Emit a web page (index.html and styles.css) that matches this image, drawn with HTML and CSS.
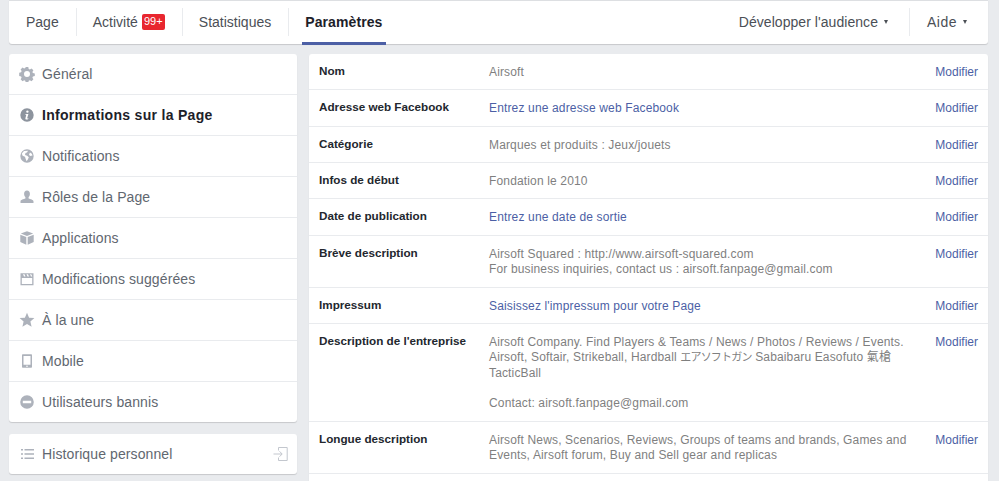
FILE: index.html
```html
<!DOCTYPE html>
<html lang="fr">
<head>
    <meta charset="UTF-8">
    <title>Informations sur la Page</title>
    <link rel="stylesheet" href="styles.css">
</head>
<body>

<div class="topbar">
    <div class="tabs">
        <a class="tab">Page</a>
        <a class="tab">Activité <span class="badge">99+</span></a>
        <a class="tab">Statistiques</a>
        <a class="tab tab-active">Paramètres</a>
    </div>
    <div class="tabs">
        <a class="tab tab-menu">Développer l'audience <i class="caret"></i></a>
        <a class="tab tab-menu tab-help">Aide <i class="caret"></i></a>
    </div>
</div>

<div class="columns">
    <div class="sidebar">
        <ul class="card menu">
            <li>
                <svg class="icon" viewBox="0 0 16 16"><path fill-rule="evenodd" d="M6.700 1h2.600l.4 1.900 1.200.5 1.600-1 1.900 1.900-1 1.600.5 1.200 1.900.4v2.600l-1.900.4-.5 1.200 1 1.600-1.900 1.900-1.600-1-1.200.5-.4 1.900H6.700l-.4-1.900-1.200-.5-1.600 1-1.900-1.900 1-1.600-.5-1.200-1.900-.4V6.700l1.900-.4.5-1.200-1-1.600 1.900-1.900 1.600 1 1.200-.5zM8 5a3 3 0 1 0 0 6 3 3 0 0 0 0-6z"/></svg>
                Général
            </li>
            <li class="current">
                <svg class="icon icon-dark" viewBox="0 0 16 16"><path fill-rule="evenodd" d="M8 1.300a6.700 6.700 0 1 1 0 13.400A6.700 6.700 0 0 1 8 1.300zM8.400 3.400a1.200 1.200 0 1 0 0 2.400 1.200 1.200 0 0 0 0-2.400zM6.500 7l-.2.800h1l-.9 3.500c-.2.900.3 1.300 1 1.300.7 0 1.500-.3 2-.7l-.1-.7-.9.300c-.2 0-.3-.1-.2-.4L9.400 7z"/></svg>
                Informations sur la Page
            </li>
            <li>
                <svg class="icon" viewBox="0 0 16 16"><path fill-rule="evenodd" d="M8 1.300a6.700 6.700 0 1 1 0 13.400A6.700 6.700 0 0 1 8 1.300zM5 3 2.800 5.500l.8 2.200 2.400 1 .6 2 1 2.500 1.200-1.700 1-2.200-1.600-1.600L6 7l.5-2 1.500-.5 1-1.800zM11 4.500l-1 2 1 1.500 2.500-.5-.7-1.800z"/></svg>
                Notifications
            </li>
            <li>
                <svg class="icon" viewBox="0 0 16 16"><path d="M8 1.500c1.900 0 2.900 1.400 2.900 3.300 0 1.300-.5 2.600-1.300 3.300v1.500c1.700.7 4.900 1.100 4.900 3v1.400h-13v-1.400c0-1.900 3.200-2.300 4.900-3V8.100C5.600 7.400 5.100 6.100 5.100 4.800c0-1.900 1-3.300 2.900-3.300z"/></svg>
                Rôles de la Page
            </li>
            <li>
                <svg class="icon" viewBox="0 0 16 16"><path d="M8 1.300l6.200 2.300L8 6 1.800 3.600zM1.300 4.700l6 2.400v7.600l-6-2.600zM14.700 4.700v7.400l-6 2.600V7.100z"/></svg>
                Applications
            </li>
            <li>
                <svg class="icon" viewBox="0 0 16 16"><path fill-rule="evenodd" d="M1.500 2.300h13v11.900h-13zM2.800 7v5.900h10.400V7zM4 3.300 5 5.600h1.500l-1-2.300zM7.500 3.300l1 2.300H10L9 3.300zM11 3.300l1 2.300h1.300l-1-2.300z"/></svg>
                Modifications suggérées
            </li>
            <li>
                <svg class="icon" viewBox="0 0 16 16"><path d="M8 .8l2.100 4.900 5.300.4-4 3.500 1.200 5.200L8 12l-4.600 2.800 1.200-5.200-4-3.500 5.300-.4z"/></svg>
                À la une
            </li>
            <li>
                <svg class="icon" viewBox="0 0 16 16"><path fill-rule="evenodd" d="M4 1.200h8c.6 0 1 .4 1 1v11.600c0 .6-.4 1-1 1H4c-.6 0-1-.4-1-1V2.200c0-.6.4-1 1-1zM4.500 3v8.800h7V3zM8 12.500a.8.800 0 1 0 0 1.600.8.800 0 0 0 0-1.600z"/></svg>
                Mobile
            </li>
            <li>
                <svg class="icon" viewBox="0 0 16 16"><path fill-rule="evenodd" d="M8 1.200a6.800 6.800 0 1 1 0 13.600A6.800 6.800 0 0 1 8 1.200zM3.800 6.700v2.600h8.400V6.700z"/></svg>
                Utilisateurs bannis
            </li>
        </ul>

        <div class="card menu history">
            <div class="history-row">
                <svg class="icon" viewBox="0 0 16 16"><path d="M2 3h2v1.500H2zM5.500 3H15v1.500H5.500zM2 7.200h2v1.500H2zM5.500 7.200H15v1.500H5.500zM2 11.500h2V13H2zM5.500 11.500H15V13H5.500z"/></svg>
                <span class="history-label">Historique personnel</span>
                <svg class="icon-out" viewBox="0 0 16 16"><path d="M5.500 4.500v-3h8.700v13H5.500v-3M.5 8h8.500M6.500 5.300 9.200 8l-2.700 2.700" fill="none" stroke="#c3c7ce" stroke-width="1"/></svg>
            </div>
        </div>
    </div>

    <div class="card info">
        <div class="row">
            <div class="label">Nom</div>
            <div class="value">Airsoft</div>
            <a class="edit">Modifier</a>
        </div>
        <div class="row">
            <div class="label">Adresse web Facebook</div>
            <div class="value"><a>Entrez une adresse web Facebook</a></div>
            <a class="edit">Modifier</a>
        </div>
        <div class="row">
            <div class="label">Catégorie</div>
            <div class="value">Marques et produits : Jeux/jouets</div>
            <a class="edit">Modifier</a>
        </div>
        <div class="row">
            <div class="label">Infos de début</div>
            <div class="value">Fondation le 2010</div>
            <a class="edit">Modifier</a>
        </div>
        <div class="row">
            <div class="label">Date de publication</div>
            <div class="value"><a>Entrez une date de sortie</a></div>
            <a class="edit">Modifier</a>
        </div>
        <div class="row">
            <div class="label">Brève description</div>
            <div class="value">Airsoft Squared : http://www.airsoft-squared.com<br>For business inquiries, contact us : airsoft.fanpage@gmail.com</div>
            <a class="edit">Modifier</a>
        </div>
        <div class="row">
            <div class="label">Impressum</div>
            <div class="value"><a>Saisissez l'impressum pour votre Page</a></div>
            <a class="edit">Modifier</a>
        </div>
        <div class="row">
            <div class="label">Description de l'entreprise</div>
            <div class="value">Airsoft Company. Find Players &amp; Teams / News / Photos / Reviews / Events.<br>Airsoft, Softair, Strikeball, Hardball <span class="kana">エアソフトガン</span> Sabaibaru Easofuto 氣槍<br>TacticBall<br><br>Contact: airsoft.fanpage@gmail.com</div>
            <a class="edit">Modifier</a>
        </div>
        <div class="row">
            <div class="label">Longue description</div>
            <div class="value">Airsoft News, Scenarios, Reviews, Groups of teams and brands, Games and<br>Events, Airsoft forum, Buy and Sell gear and replicas</div>
            <a class="edit">Modifier</a>
        </div>
    </div>
</div>

</body>
</html>
```

FILE: styles.css
```css
* {
    box-sizing: border-box;
}

html, body {
    height: 481px;
    overflow: hidden;
}

body {
    margin: 0;
    padding: 0 11px 0 9px;
    background-color: #e9ebee;
    font-family: "Liberation Sans", "Noto Sans CJK JP", sans-serif;
    color: #4b4f56;
}

.topbar {
    display: flex;
    justify-content: space-between;
    height: 44px;
    margin-bottom: 10px;
    background-color: white;
    border-top: 1px solid #dddfe2;
    border-radius: 0 0 3px 3px;
    box-shadow: 0 1px 1px rgba(0, 0, 0, 0.15);
}

.tabs {
    display: flex;
}

.tab {
    position: relative;
    display: flex;
    align-items: center;
    height: 41px;
    padding: 0 17px;
    font-size: 14px;
    color: #4b4f56;
}

.tab + .tab::before {
    content: "";
    position: absolute;
    left: 0;
    top: 7px;
    height: 28px;
    width: 1px;
    background-color: #e9ebee;
}

.tab-active {
    padding-right: 4px;
    font-weight: bold;
    letter-spacing: 0.1px;
    color: #1d2129;
}

.tab-active::after {
    content: "";
    position: absolute;
    left: 14px;
    right: 0;
    bottom: -3px;
    height: 3px;
    background-color: #4c5fa5;
}

.tab-menu {
    padding-right: 21px;
    letter-spacing: 0.05px;
}

.tab-help {
    padding-left: 18px;
    letter-spacing: 0.5px;
}

.badge {
    margin-left: 4px;
    width: 23px;
    height: 16px;
    line-height: 15px;
    text-align: center;
    font-size: 11px;
    letter-spacing: 0;
    color: white;
    background-color: #e8262f;
    border-radius: 2px;
}

.caret {
    margin-left: 6px;
    border-top: 4px solid #4b4f56;
    border-left: 2.500px solid transparent;
    border-right: 2.500px solid transparent;
}

.columns {
    display: flex;
    align-items: flex-start;
    gap: 12px;
}

.sidebar {
    flex: 0 0 288px;
}

.card {
    background-color: white;
    border-radius: 3px;
    box-shadow: 0 1px 1px rgba(0, 0, 0, 0.15);
}

.menu {
    margin: 0;
    padding: 0;
    list-style: none;
    font-size: 14px;
    letter-spacing: 0.1px;
    color: #616770;
}

.menu li,
.history-row {
    display: flex;
    align-items: center;
    height: 41px;
    padding: 0 10px;
    border-bottom: 1px solid #e9ebee;
}

.menu li:last-child {
    height: 40px;
    border-bottom: none;
}

.menu .current {
    font-weight: bold;
    letter-spacing: 0.3px;
    color: #1d2129;
}

.icon {
    flex: none;
    width: 16px;
    height: 16px;
    margin-right: 7px;
    fill: #adb2bb;
}

.icon-dark {
    fill: #8d949e;
}

.history {
    margin-top: 12px;
}

.history-row {
    height: 40px;
    border-bottom: none;
}

.history-label {
    flex: 1;
}

.icon-out {
    width: 16px;
    height: 16px;
    margin-right: -2px;
}

.info {
    flex: 1;
    height: 430px;
    border-radius: 3px 3px 0 0;
    font-size: 12px;
    line-height: 15.360px;
}

.row {
    display: flex;
    padding: 11px 10px 9px;
    border-bottom: 1px solid #e9ebee;
}

.row:last-child {
    padding-bottom: 10px;
}

.label {
    flex: 0 0 170px;
    margin-top: -2px;
    font-size: 11.700px;
    font-weight: bold;
    color: #23272e;
}

.value {
    flex: 1;
    letter-spacing: 0.15px;
    color: #7f7f7f;
}

.kana {
    font-size: 11px;
    letter-spacing: -0.8px;
}

.value a,
.edit {
    color: #4c5fa5;
}
```
